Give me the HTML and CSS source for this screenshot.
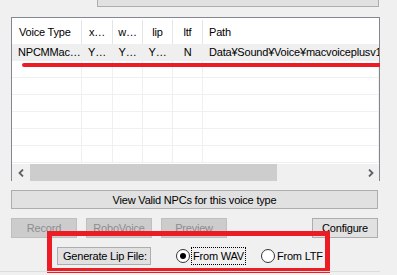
FILE: index.html
```html
<!DOCTYPE html>
<html lang="en">
<head>
  <meta charset="UTF-8">
  <title>Voice Type</title>
  <link rel="stylesheet" href="styles.css">
</head>
<body>
  <div class="window">
    <div class="top-button"></div>

    <div class="list">
      <div class="cols head">
        <div class="cell left">Voice Type</div>
        <div class="cell">x…</div>
        <div class="cell">w…</div>
        <div class="cell">lip</div>
        <div class="cell">ltf</div>
        <div class="cell path">Path</div>
      </div>
      <div class="cols row selected">
        <div class="cell left">NPCMMac…</div>
        <div class="cell">Y…</div>
        <div class="cell">Y…</div>
        <div class="cell">Y…</div>
        <div class="cell">N</div>
        <div class="cell path">Data¥Sound¥Voice¥macvoiceplusv1</div>
      </div>
      <div class="cols row"><div class="cell"></div><div class="cell"></div><div class="cell"></div><div class="cell"></div><div class="cell"></div><div class="cell"></div></div>
      <div class="cols row"><div class="cell"></div><div class="cell"></div><div class="cell"></div><div class="cell"></div><div class="cell"></div><div class="cell"></div></div>
      <div class="cols row"><div class="cell"></div><div class="cell"></div><div class="cell"></div><div class="cell"></div><div class="cell"></div><div class="cell"></div></div>
      <div class="cols row"><div class="cell"></div><div class="cell"></div><div class="cell"></div><div class="cell"></div><div class="cell"></div><div class="cell"></div></div>
      <div class="cols row"><div class="cell"></div><div class="cell"></div><div class="cell"></div><div class="cell"></div><div class="cell"></div><div class="cell"></div></div>
      <div class="cols row"><div class="cell"></div><div class="cell"></div><div class="cell"></div><div class="cell"></div><div class="cell"></div><div class="cell"></div></div>
      <div class="hscroll">
        <span class="arrow">
          <svg width="7" height="8" viewBox="0 0 7 8"><path d="M5 0.5 L1.5 4 L5 7.5" fill="none" stroke="#606060" stroke-width="1.8"/></svg>
        </span>
        <div class="track"><div class="thumb"></div></div>
        <span class="arrow">
          <svg width="7" height="8" viewBox="0 0 7 8"><path d="M2 0.5 L5.5 4 L2 7.5" fill="none" stroke="#606060" stroke-width="1.8"/></svg>
        </span>
      </div>
    </div>

    <button class="btn wide">View Valid NPCs for this voice type</button>

    <div class="actions">
      <button class="btn small" disabled>Record</button>
      <button class="btn small" disabled>RoboVoice</button>
      <button class="btn small" disabled>Preview</button>
      <span class="spacer"></span>
      <button class="btn small">Configure</button>
    </div>

    <div class="lip-row">
      <button class="btn lip">Generate Lip File:</button>
      <label class="radio"><span class="dot checked"></span><span class="focus">From WAV</span></label>
      <label class="radio"><span class="dot"></span><span>From LTF</span></label>
    </div>

    <div class="mark-line"></div>
    <div class="mark-box"></div>
  </div>
</body>
</html>
```

FILE: styles.css
```css
body { margin: 0; background: #f0f0f0; font-family: "Liberation Sans", Arial, sans-serif; font-size: 11px; letter-spacing: -0.2px; color: #000; }
.window { position: relative; width: 397px; height: 275px; overflow: hidden; padding: 0 0 0 11px; box-sizing: border-box; }
.top-button { margin-left: 86px; width: 280px; height: 6px; background: #e1e1e1; border: 1px solid #adadad; border-top: none; }
.list { margin-top: 10px; width: 367px; height: 162px; background: #fff; border: 1px solid #828790; }
.cols { display: grid; grid-template-columns: 70px 31px 30px 30px 30px 1fr; }
.cell { text-align: center; white-space: nowrap; overflow: hidden; border-right: 1px solid #f0f0f0; }
.cell.left { text-align: left; padding-left: 7px; }
.cell.path { text-align: left; padding-left: 6px; border-right: none; }
.head { height: 26px; line-height: 26px; }
.head .cell { border-right-color: #e5e5e5; margin-top: 2px; line-height: 24px; }
.head .cell.path { border-right: none; }
.row { height: 17px; line-height: 16px; border-bottom: 1px solid #f0f0f0; box-sizing: border-box; }
.row.selected { background: #efefef; border-bottom-color: #efefef; }
.row.selected .cell { border-right-color: transparent; }
.row.selected .cell.left { padding-left: 6px; }
.hscroll { display: flex; height: 17px; background: #f0f0f0; margin-top: 1px; }
.arrow { width: 18px; display: flex; align-items: center; justify-content: center; }
.track { flex: 1; }
.thumb { width: 247px; height: 17px; background: #cdcdcd; }
.btn { font-family: inherit; font-size: 11px; letter-spacing: -0.2px; color: #000; background: #e1e1e1; border: 1px solid #adadad; padding: 0; box-sizing: border-box; }
.btn:disabled { background: #cccccc; border-color: #bfbfbf; color: #8d8d8d; }
.wide { display: block; margin-top: 9px; width: 367px; height: 19px; }
.actions { display: flex; gap: 9px; margin-top: 9px; width: 367px; }
.small { width: 66px; height: 20px; }
.spacer { flex: 1; }
.lip-row { display: flex; align-items: center; margin-top: 9px; margin-left: 46px; height: 18px; }
.lip { width: 94px; height: 18px; text-align: left; padding-left: 5px; background: #e1e1e1; border-color: #adadad; }
.radio { display: flex; align-items: center; margin-left: 25px; }
.radio + .radio { margin-left: 16px; }
.dot { width: 12px; height: 12px; border: 1px solid #333; border-radius: 50%; background: #fff; position: relative; margin-right: 2px; }
.dot.checked::after { content: ""; position: absolute; left: 3px; top: 3px; width: 6px; height: 6px; border-radius: 50%; background: #000; }
.focus { outline: 1px dotted #000; padding: 2px 1px; }
.mark-line { position: absolute; left: 22px; top: 63px; width: 358px; height: 4px; background: #ed1c24; border-radius: 2px 0 0 2px; }
.mark-box { position: absolute; left: 47px; top: 231px; width: 283px; height: 42px; border: 5px solid #ed1c24; box-sizing: border-box; }
.window::after { content: ""; position: absolute; left: 0; top: 271px; width: 380px; height: 1px; background: #dcdcdc; }
```
